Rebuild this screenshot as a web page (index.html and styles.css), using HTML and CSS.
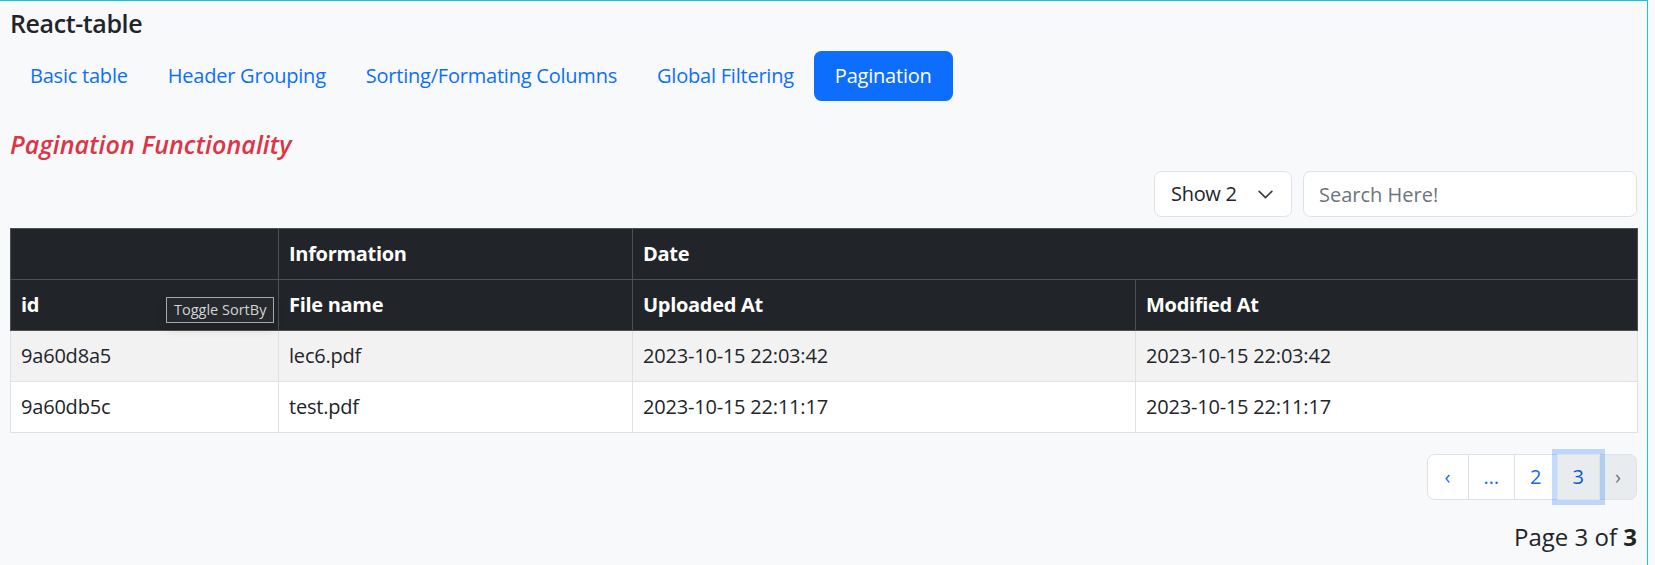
FILE: index.html
```html
<!DOCTYPE html>
<html lang="en">
<head>
<meta charset="utf-8">
<title>React-table</title>
<link rel="stylesheet" href="styles.css">
</head>
<body>
<div class="frame">
  <h1 class="app-title">React-table</h1>
  <nav class="tabs">
    <a class="tab">Basic table</a>
    <a class="tab">Header Grouping</a>
    <a class="tab">Sorting/Formating Columns</a>
    <a class="tab">Global Filtering</a>
    <a class="tab active">Pagination</a>
  </nav>
  <h2 class="section-title">Pagination Functionality</h2>
  <div class="toolbar">
    <div class="select">
      <span>Show 2</span>
      <svg class="chev" viewBox="0 0 16 16" width="17" height="17" aria-hidden="true"><path d="m2 5 6 6 6-6" fill="none" stroke="#343a40" stroke-width="1.5" stroke-linecap="round" stroke-linejoin="round"/></svg>
    </div>
    <input class="search" type="text" placeholder="Search Here!">
  </div>
  <table class="data">
    <colgroup><col class="c1"><col class="c2"><col class="c3"><col class="c4"></colgroup>
    <thead>
      <tr><th></th><th>Information</th><th colspan="2">Date</th></tr>
      <tr><th class="has-tip">id<span class="tip">Toggle SortBy</span></th><th>File name</th><th>Uploaded At</th><th>Modified At</th></tr>
    </thead>
    <tbody>
      <tr class="striped"><td>9a60d8a5</td><td>lec6.pdf</td><td>2023-10-15 22:03:42</td><td>2023-10-15 22:03:42</td></tr>
      <tr><td>9a60db5c</td><td>test.pdf</td><td>2023-10-15 22:11:17</td><td>2023-10-15 22:11:17</td></tr>
    </tbody>
  </table>
  <div class="pager-row">
    <ul class="pager">
      <li class="pg"><a class="pg-link">&lsaquo;</a></li>
      <li class="pg"><a class="pg-link">&hellip;</a></li>
      <li class="pg"><a class="pg-link">2</a></li>
      <li class="pg"><a class="pg-link focus">3</a></li>
      <li class="pg"><a class="pg-link disabled">&rsaquo;</a></li>
    </ul>
  </div>
  <p class="page-info">Page 3 of <strong>3</strong></p>
</div>
</body>
</html>
```
FILE: styles.css
```css
* { box-sizing: border-box; }
html, body { margin: 0; padding: 0; }
body {
  background: #f8f9fa;
  color: #212529;
  font-family: "Open Sans", "Noto Sans", sans-serif;
  font-size: 20px;
  line-height: 1.5;
}
.frame {
  width: 1648px;
  min-height: 565px;
  border-top: 1px solid #17c3ea;
  border-right: 1px solid #17c3ea;
  padding: 7px 10px 0 10px;
}
.app-title {
  margin: 0 0 12px 0;
  font-size: 25px;
  font-weight: 600;
  line-height: 1.25;
  letter-spacing: -0.4px;
}
.tabs {
  display: flex;
  height: 50px;
}
.tab {
  display: block;
  padding: 10px 20px;
  line-height: 30px;
  color: #0d6efd;
  text-decoration: none;
  border-radius: 7.5px;
  letter-spacing: -0.22px;
}
.tab.active {
  background: #0d6efd;
  color: #fff;
  padding: 10px 21px;
}
.section-title {
  margin: 29px 0 12px 0;
  font-size: 25px;
  font-weight: 600;
  font-style: italic;
  line-height: 1.15;
  color: #dc3545;
  letter-spacing: 0.1px;
}
.toolbar {
  display: flex;
  justify-content: flex-end;
  gap: 11px;
  margin-bottom: 11px;
}
.select {
  width: 138px;
  height: 46px;
  display: flex;
  align-items: center;
  justify-content: space-between;
  padding: 0 17px 0 16px;
  background: #fff;
  border: 1px solid #dee2e6;
  border-radius: 7.5px;
  color: #212529;
  letter-spacing: -0.3px;
}
.chev { display: block; }
.search {
  width: 334px;
  height: 46px;
  padding: 0 15px;
  font: inherit;
  color: #212529;
  background: #fff;
  border: 1px solid #dee2e6;
  border-radius: 7.5px;
  outline: none;
}
.search::placeholder { color: #6c757d; opacity: 1; }
.data {
  width: 1627px;
  table-layout: fixed;
  border-collapse: collapse;
}
.c1 { width: 268px; }
.c2 { width: 354px; }
.c3 { width: 503px; }
.c4 { width: 502px; }
.data th, .data td {
  padding: 10px;
  line-height: 30px;
  text-align: left;
  vertical-align: top;
}
.data th {
  background: #212529;
  color: #fff;
  font-weight: 700;
  border: 1px solid #4d5154;
  letter-spacing: -0.3px;
}
.data td {
  background: #fff;
  border: 1px solid #dee2e6;
  letter-spacing: -0.2px;
}
.data .striped td { background: #f2f2f2; }
.has-tip { position: relative; }
.tip {
  position: absolute;
  left: 155px;
  top: 17px;
  height: 26px;
  padding: 0 7px;
  font-size: 14.5px;
  font-weight: 400;
  line-height: 24px;
  letter-spacing: 0;
  color: #d4d4d4;
  background: #26292d;
  border: 1px solid #a8a8a8;
  white-space: nowrap;
  box-shadow: 0 6px 12px rgba(0, 0, 0, 0.12);
  z-index: 2;
}
.pager-row {
  display: flex;
  justify-content: flex-end;
  margin-top: 21px;
}
.pager {
  display: flex;
  list-style: none;
  margin: 0;
  padding: 0;
}
.pg + .pg { margin-left: -1px; }
.pg-link {
  display: block;
  padding: 7px 15px;
  line-height: 30px;
  color: #0d6efd;
  background: #fff;
  border: 1px solid #dee2e6;
  text-decoration: none;
}
.pg:first-child .pg-link { border-radius: 7.5px 0 0 7.5px; padding: 7px 17px; }
.pg:last-child .pg-link { border-radius: 0 7.5px 7.5px 0; }
.pg-link.focus {
  position: relative;
  z-index: 3;
  color: #0a58ca;
  background: #e9ecef;
  box-shadow: 0 0 0 5px rgba(13, 110, 253, 0.25);
}
.pg-link.disabled {
  color: #6c757d;
  background: #e9ecef;
}
.page-info {
  margin: 19px 0 0 0;
  text-align: right;
  font-size: 24px;
  line-height: 1.5;
}
.page-info strong { font-weight: 700; }
```
